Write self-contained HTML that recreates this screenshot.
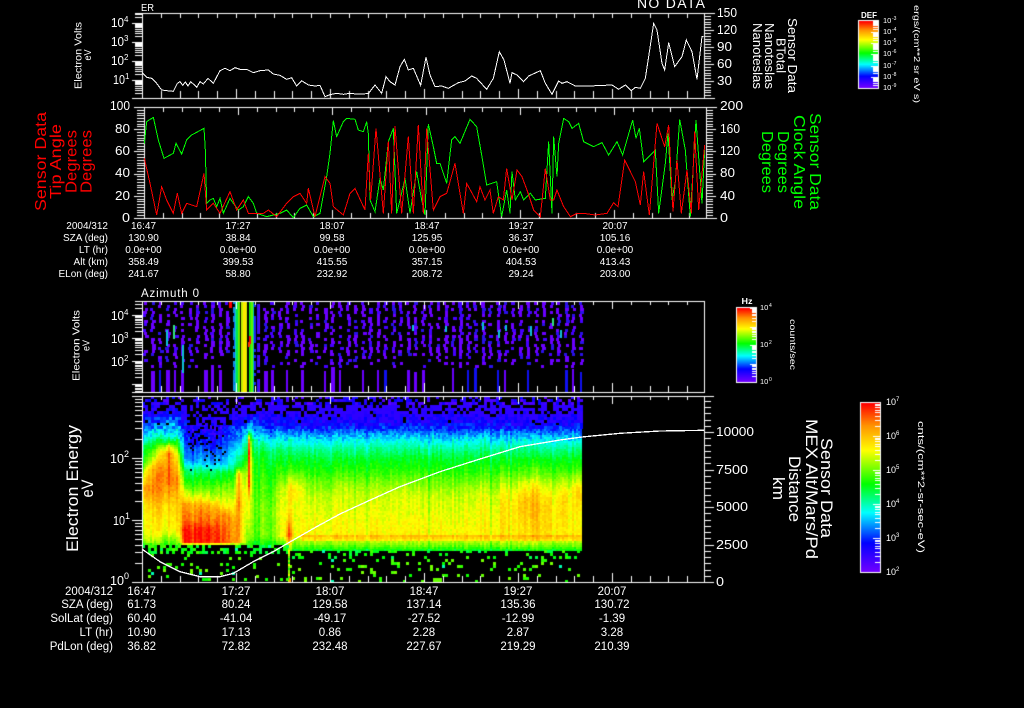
<!DOCTYPE html>
<html><head><meta charset="utf-8"><title>Sensor Data</title>
<style>
html,body{margin:0;padding:0;background:#000;width:1024px;height:708px;overflow:hidden}
canvas,svg{position:absolute;left:0;top:0}
svg{font-family:"Liberation Sans",sans-serif;fill:#fff}
.a{font-size:10px;text-anchor:middle}
.l{font-size:10px;text-anchor:end}
.b{font-size:11.5px;text-anchor:middle}
.m{font-size:11.5px;text-anchor:end}
.n{font-size:13px}
.cb{font-size:7.5px}
.r{text-anchor:middle}
polyline{fill:none;shape-rendering:crispEdges;vector-effect:non-scaling-stroke}
</style></head><body>
<canvas id="c" width="1024" height="708"></canvas>
<svg width="1024" height="708" viewBox="0 0 1024 708">
<!-- Panel 1 curve -->
<g transform="scale(.33333)"><polyline stroke="#fff" stroke-width="1" points="427,218 440,232 455,235 470,250 485,270 500,272 520,274 532,250 540,245 548,256 556,246 564,258 572,245 580,252 590,262 600,245 610,252 624,235 640,250 660,212 675,205 690,212 705,203 720,208 740,208 760,218 780,212 805,210 820,222 840,226 860,238 875,233 890,258 905,242 925,255 945,258 960,256 975,290 990,284 1010,280 1030,283 1050,280 1070,282 1105,281 1125,255 1145,280 1158,230 1170,245 1185,255 1200,200 1213,178 1225,210 1240,205 1262,256 1278,172 1290,225 1305,260 1325,258 1345,265 1375,248 1395,243 1415,228 1430,235 1460,268 1480,235 1498,155 1512,180 1530,250 1536,218 1551,225 1571,245 1586,228 1621,212 1636,250 1656,283 1676,243 1686,250 1701,245 1726,258 1766,258 1836,255 1856,268 1876,255 1894,272 1906,262 1921,265 1936,235 1946,170 1961,70 1971,90 1986,190 1994,210 2006,128 2024,200 2046,170 2059,120 2076,155 2091,238 2106,110 2111,110"/>
<!-- Panel 2 green -->
<polyline stroke="#00ff00" stroke-width="1" points="433,430 440,365 460,352 475,420 492,475 520,460 528,430 545,462 560,420 575,405 612,385 616,450 620,610 630,600 640,595 650,620 660,595 670,640 690,595 700,610 715,630 730,620 745,590 760,610 770,640 800,650 820,645 840,640 860,630 880,653 900,625 920,615 940,650 960,640 980,530 990,460 1000,362 1010,410 1030,365 1040,355 1065,358 1075,390 1090,395 1100,365 1105,400 1110,600 1125,635 1140,535 1150,570 1165,425 1180,385 1190,640 1200,600 1215,535 1230,640 1250,515 1265,600 1275,645 1285,372 1300,440 1310,490 1320,490 1340,550 1355,420 1365,410 1380,430 1410,358 1430,380 1445,465 1460,555 1490,545 1505,650 1520,570 1530,640 1536,515 1546,600 1561,575 1571,600 1591,580 1606,600 1636,595 1646,425 1656,640 1661,410 1671,530 1676,430 1691,355 1706,365 1716,385 1736,370 1751,425 1781,440 1806,428 1826,465 1851,425 1868,465 1898,360 1908,415 1918,385 1931,485 1966,450 1976,640 1996,490 2004,400 2016,600 2026,545 2039,358 2056,450 2071,650 2088,360 2106,610 2114,450"/>
<!-- Panel 2 red -->
<polyline stroke="#ff0000" stroke-width="1" points="433,475 450,550 470,645 485,560 500,600 520,640 532,580 545,640 560,610 590,620 612,520 620,630 640,610 660,640 690,575 710,630 730,600 745,640 770,640 790,640 805,630 830,650 860,610 880,590 900,580 920,610 925,565 945,650 975,530 990,550 1000,620 1030,645 1050,580 1065,565 1095,630 1105,460 1112,600 1128,385 1150,640 1165,425 1175,640 1185,378 1205,640 1225,410 1240,640 1255,375 1270,640 1280,385 1300,630 1320,590 1340,580 1350,545 1365,490 1390,640 1400,550 1430,605 1440,560 1455,600 1470,570 1480,640 1495,590 1510,600 1520,505 1536,600 1551,510 1566,530 1581,570 1601,630 1621,650 1636,505 1651,600 1661,600 1671,570 1691,620 1711,650 1731,640 1751,640 1786,645 1821,640 1841,608 1854,620 1874,480 1906,545 1921,615 1931,515 1948,645 1971,370 1994,440 2006,375 2019,635 2031,480 2044,640 2061,510 2074,640 2084,395 2096,630 2114,435"/>
</g>
<!-- Panel 4 altitude curve -->
<g transform="translate(0,290) scale(.33333)"><polyline stroke="#fff" stroke-width="1.3" points="427,778 480,815 540,845 600,860 660,860 700,850 760,815 820,785 880,750 950,710 1020,672 1100,635 1200,590"/></g>
<polyline stroke="#fff" stroke-width="1.3" points="400,486.7 440,471.7 480,459 520,446.7 560,440 582,437 620,433.3 660,431 704,430.3"/>

<!-- top -->
<text x="141" y="11" font-size="10" textLength="13" lengthAdjust="spacingAndGlyphs">ER</text>
<text x="637" y="8" font-size="14" textLength="68" lengthAdjust="spacing">NO DATA</text>

<!-- Panel 1 labels -->
<g class="n">
<text x="111" y="27" textLength="13" lengthAdjust="spacingAndGlyphs">10</text><text x="124" y="22" font-size="8">4</text>
<text x="111" y="46" textLength="13" lengthAdjust="spacingAndGlyphs">10</text><text x="124" y="41" font-size="8">3</text>
<text x="111" y="65" textLength="13" lengthAdjust="spacingAndGlyphs">10</text><text x="124" y="60" font-size="8">2</text>
<text x="113" y="84" textLength="12" lengthAdjust="spacingAndGlyphs">10</text><text x="125" y="79" font-size="8">1</text>
<text x="717" y="17" textLength="20" lengthAdjust="spacingAndGlyphs">150</text>
<text x="717" y="34" textLength="20" lengthAdjust="spacingAndGlyphs">120</text>
<text x="717" y="51" textLength="15" lengthAdjust="spacingAndGlyphs">90</text>
<text x="717" y="68" textLength="15" lengthAdjust="spacingAndGlyphs">60</text>
<text x="717" y="85" textLength="15" lengthAdjust="spacingAndGlyphs">30</text>
<!-- Panel 2 -->
<text x="110" y="110" textLength="20" lengthAdjust="spacingAndGlyphs">100</text>
<text x="115" y="133" textLength="15" lengthAdjust="spacingAndGlyphs">80</text>
<text x="115" y="155" textLength="15" lengthAdjust="spacingAndGlyphs">60</text>
<text x="115" y="177" textLength="15" lengthAdjust="spacingAndGlyphs">40</text>
<text x="115" y="200" textLength="15" lengthAdjust="spacingAndGlyphs">20</text>
<text x="122" y="222" textLength="8" lengthAdjust="spacingAndGlyphs">0</text>
<text x="720" y="110" textLength="23" lengthAdjust="spacingAndGlyphs">200</text>
<text x="720" y="133" textLength="20" lengthAdjust="spacingAndGlyphs">160</text>
<text x="720" y="155" textLength="20" lengthAdjust="spacingAndGlyphs">120</text>
<text x="720" y="177" textLength="15" lengthAdjust="spacingAndGlyphs">80</text>
<text x="720" y="200" textLength="15" lengthAdjust="spacingAndGlyphs">40</text>
<text x="720" y="222" textLength="8" lengthAdjust="spacingAndGlyphs">0</text>
<!-- Panel 3 -->
<text x="111" y="320" textLength="13" lengthAdjust="spacingAndGlyphs">10</text><text x="124" y="315" font-size="8">4</text>
<text x="111" y="343" textLength="13" lengthAdjust="spacingAndGlyphs">10</text><text x="124" y="338" font-size="8">3</text>
<text x="111" y="366" textLength="13" lengthAdjust="spacingAndGlyphs">10</text><text x="124" y="361" font-size="8">2</text>
<!-- Panel 4 -->
<text x="110" y="463" textLength="14" lengthAdjust="spacingAndGlyphs">10</text><text x="124" y="457" font-size="9">2</text>
<text x="113" y="525" textLength="12" lengthAdjust="spacingAndGlyphs">10</text><text x="125" y="519" font-size="9">1</text>
<text x="110" y="585" textLength="14" lengthAdjust="spacingAndGlyphs">10</text><text x="124" y="579" font-size="9">0</text>
<text x="716" y="436" textLength="38" lengthAdjust="spacingAndGlyphs">10000</text>
<text x="716" y="474" textLength="32" lengthAdjust="spacingAndGlyphs">7500</text>
<text x="716" y="511" textLength="32" lengthAdjust="spacingAndGlyphs">5000</text>
<text x="716" y="549" textLength="32" lengthAdjust="spacingAndGlyphs">2500</text>
<text x="716" y="586" textLength="8" lengthAdjust="spacingAndGlyphs">0</text>
</g>

<!-- Y titles -->
<g class="r" font-size="10">
<text transform="translate(81.5,55.5) rotate(-90)" textLength="67" lengthAdjust="spacingAndGlyphs">Electron Volts</text>
<text transform="translate(91,55) rotate(-90)" textLength="11" lengthAdjust="spacingAndGlyphs">eV</text>
<text transform="translate(79.5,345.5) rotate(-90)" textLength="71" lengthAdjust="spacingAndGlyphs">Electron Volts</text>
<text transform="translate(89.5,345.5) rotate(-90)" textLength="11" lengthAdjust="spacingAndGlyphs">eV</text>
</g>
<g class="r" font-size="17">
<text transform="translate(78,488.5) rotate(-90)" textLength="127" lengthAdjust="spacingAndGlyphs">Electron Energy</text>
<text transform="translate(93,488.5) rotate(-90)" textLength="18" lengthAdjust="spacingAndGlyphs">eV</text>
</g>
<g class="r" font-size="16" style="fill:#ff0000">
<text transform="translate(46,161.5) rotate(-90)" textLength="99" lengthAdjust="spacingAndGlyphs">Sensor Data</text>
<text transform="translate(61,161.5) rotate(-90)" textLength="75" lengthAdjust="spacingAndGlyphs">Tip Angle</text>
<text transform="translate(76.5,161.5) rotate(-90)" textLength="63" lengthAdjust="spacingAndGlyphs">Degrees</text>
<text transform="translate(91.5,161.5) rotate(-90)" textLength="63" lengthAdjust="spacingAndGlyphs">Degrees</text>
</g>
<g class="r" font-size="16" style="fill:#00ff00">
<text transform="translate(810,161.5) rotate(90)" textLength="97" lengthAdjust="spacingAndGlyphs">Sensor Data</text>
<text transform="translate(794,162) rotate(90)" textLength="94" lengthAdjust="spacingAndGlyphs">Clock Angle</text>
<text transform="translate(778,162) rotate(90)" textLength="62" lengthAdjust="spacingAndGlyphs">Degrees</text>
<text transform="translate(762,162) rotate(90)" textLength="62" lengthAdjust="spacingAndGlyphs">Degrees</text>
</g>
<g class="r" font-size="13">
<text transform="translate(788,55.5) rotate(90)" textLength="75" lengthAdjust="spacingAndGlyphs">Sensor Data</text>
<text transform="translate(776.5,55.5) rotate(90)" textLength="35" lengthAdjust="spacingAndGlyphs">BTotal</text>
<text transform="translate(765,56) rotate(90)" textLength="66" lengthAdjust="spacingAndGlyphs">Nanoteslas</text>
<text transform="translate(753,56) rotate(90)" textLength="66" lengthAdjust="spacingAndGlyphs">Nanoteslas</text>
</g>
<g class="r" font-size="17">
<text transform="translate(821,488) rotate(90)" textLength="100" lengthAdjust="spacingAndGlyphs">Sensor Data</text>
<text transform="translate(806,489) rotate(90)" textLength="140" lengthAdjust="spacingAndGlyphs">MEX Alt/Mars/Pd</text>
<text transform="translate(789,489) rotate(90)" textLength="66" lengthAdjust="spacingAndGlyphs">Distance</text>
<text transform="translate(773,488.5) rotate(90)" textLength="23" lengthAdjust="spacingAndGlyphs">km</text>
</g>

<!-- Table under panel 2 -->
<text class="l" x="108" y="229">2004/312</text><text class="a" x="143.5" y="229">16:47</text><text class="a" x="238" y="229">17:27</text><text class="a" x="332" y="229">18:07</text><text class="a" x="427" y="229">18:47</text><text class="a" x="521" y="229">19:27</text><text class="a" x="615" y="229">20:07</text>
<text class="l" x="108" y="241">SZA (deg)</text><text class="a" x="143.5" y="241">130.90</text><text class="a" x="238" y="241">38.84</text><text class="a" x="332" y="241">99.58</text><text class="a" x="427" y="241">125.95</text><text class="a" x="521" y="241">36.37</text><text class="a" x="615" y="241">105.16</text>
<text class="l" x="108" y="253">LT (hr)</text><text class="a" x="143.5" y="253">0.0e+00</text><text class="a" x="238" y="253">0.0e+00</text><text class="a" x="332" y="253">0.0e+00</text><text class="a" x="427" y="253">0.0e+00</text><text class="a" x="521" y="253">0.0e+00</text><text class="a" x="615" y="253">0.0e+00</text>
<text class="l" x="108" y="265">Alt (km)</text><text class="a" x="143.5" y="265">358.49</text><text class="a" x="238" y="265">399.53</text><text class="a" x="332" y="265">415.55</text><text class="a" x="427" y="265">357.15</text><text class="a" x="521" y="265">404.53</text><text class="a" x="615" y="265">413.43</text>
<text class="l" x="108" y="277">ELon (deg)</text><text class="a" x="143.5" y="277">241.67</text><text class="a" x="238" y="277">58.80</text><text class="a" x="332" y="277">232.92</text><text class="a" x="427" y="277">208.72</text><text class="a" x="521" y="277">29.24</text><text class="a" x="615" y="277">203.00</text>

<text x="141" y="297" font-size="11.5" textLength="58" lengthAdjust="spacing">Azimuth 0</text>

<!-- Table under panel 4 -->
<text class="m" x="113" y="595">2004/312</text><text class="b" x="141.7" y="595">16:47</text><text class="b" x="236" y="595">17:27</text><text class="b" x="330" y="595">18:07</text><text class="b" x="424" y="595">18:47</text><text class="b" x="518" y="595">19:27</text><text class="b" x="612" y="595">20:07</text>
<text class="m" x="113" y="608">SZA (deg)</text><text class="b" x="141.7" y="608">61.73</text><text class="b" x="236" y="608">80.24</text><text class="b" x="330" y="608">129.58</text><text class="b" x="424" y="608">137.14</text><text class="b" x="518" y="608">135.36</text><text class="b" x="612" y="608">130.72</text>
<text class="m" x="113" y="622">SolLat (deg)</text><text class="b" x="141.7" y="622">60.40</text><text class="b" x="236" y="622">-41.04</text><text class="b" x="330" y="622">-49.17</text><text class="b" x="424" y="622">-27.52</text><text class="b" x="518" y="622">-12.99</text><text class="b" x="612" y="622">-1.39</text>
<text class="m" x="113" y="636">LT (hr)</text><text class="b" x="141.7" y="636">10.90</text><text class="b" x="236" y="636">17.13</text><text class="b" x="330" y="636">0.86</text><text class="b" x="424" y="636">2.28</text><text class="b" x="518" y="636">2.87</text><text class="b" x="612" y="636">3.28</text>
<text class="m" x="113" y="650">PdLon (deg)</text><text class="b" x="141.7" y="650">36.82</text><text class="b" x="236" y="650">72.82</text><text class="b" x="330" y="650">232.48</text><text class="b" x="424" y="650">227.67</text><text class="b" x="518" y="650">219.29</text><text class="b" x="612" y="650">210.39</text>

<!-- Colorbar 1 labels -->
<text x="861" y="18" font-size="8.5" font-weight="bold" textLength="16" lengthAdjust="spacingAndGlyphs">DEF</text>
<g class="cb">
<text x="883" y="23">10</text><text x="892" y="20" font-size="5">-3</text>
<text x="883" y="34">10</text><text x="892" y="31" font-size="5">-4</text>
<text x="883" y="45">10</text><text x="892" y="42" font-size="5">-5</text>
<text x="883" y="56">10</text><text x="892" y="53" font-size="5">-6</text>
<text x="883" y="68">10</text><text x="892" y="65" font-size="5">-7</text>
<text x="883" y="79">10</text><text x="892" y="76" font-size="5">-8</text>
<text x="883" y="90">10</text><text x="892" y="87" font-size="5">-9</text>
</g>
<text class="r" font-size="8" transform="translate(914,54) rotate(90)" textLength="98" lengthAdjust="spacingAndGlyphs">ergs/(cm**2 sr eV s)</text>

<!-- Colorbar 2 labels -->
<text x="741.5" y="304" font-size="8.5" font-weight="bold" textLength="11" lengthAdjust="spacingAndGlyphs">Hz</text>
<g class="cb">
<text x="760" y="310">10</text><text x="769" y="307" font-size="5">4</text>
<text x="760" y="347">10</text><text x="769" y="344" font-size="5">2</text>
<text x="760" y="384">10</text><text x="769" y="381" font-size="5">0</text>
</g>
<text class="r" font-size="8" transform="translate(790,344.5) rotate(90)" textLength="51" lengthAdjust="spacingAndGlyphs">counts/sec</text>

<!-- Colorbar 3 labels -->
<g font-size="9">
<text x="886" y="405">10</text><text x="896" y="401" font-size="6">7</text>
<text x="886" y="439">10</text><text x="896" y="435" font-size="6">6</text>
<text x="886" y="473">10</text><text x="896" y="469" font-size="6">5</text>
<text x="886" y="507">10</text><text x="896" y="503" font-size="6">4</text>
<text x="886" y="541">10</text><text x="896" y="537" font-size="6">3</text>
<text x="886" y="575">10</text><text x="896" y="571" font-size="6">2</text>
</g>
<text class="r" font-size="9" transform="translate(918,487) rotate(90)" textLength="132" lengthAdjust="spacingAndGlyphs">cnts/(cm**2-sr-sec-eV)</text>
</svg>
<script>
(function(){
var c=document.getElementById('c').getContext('2d');
c.fillStyle='#000';c.fillRect(0,0,1024,708);
var seed=12345;
function rnd(){seed=(seed*1664525+1013904223)%4294967296;return seed/4294967296;}
function R(x,y,w,h,col){c.fillStyle=col;c.fillRect(Math.round(x),Math.round(y),w,h);}
var stops=[[0,[112,0,255]],[.17,[0,0,255]],[.35,[0,255,255]],[.52,[0,255,0]],[.72,[255,255,0]],[.87,[255,145,0]],[1,[255,0,0]]];
function col(v){
 if(v<0)v=0;if(v>1)v=1;
 for(var i=1;i<stops.length;i++){if(v<=stops[i][0]){
  var a=stops[i-1],b=stops[i],t=(v-a[0])/(b[0]-a[0]);
  return 'rgb('+Math.round(a[1][0]+(b[1][0]-a[1][0])*t)+','+Math.round(a[1][1]+(b[1][1]-a[1][1])*t)+','+Math.round(a[1][2]+(b[1][2]-a[1][2])*t)+')';
 }}
 return 'rgb(255,0,0)';
}
function prof(p,y){
 if(y<=p[0][0])return p[0][1];
 for(var i=1;i<p.length;i++){if(y<=p[i][0]){var t=(y-p[i-1][0])/(p[i][0]-p[i-1][0]);return p[i-1][1]+(p[i][1]-p[i-1][1])*t;}}
 return p[p.length-1][1];
}
var D=[[396,-.12],[408,.05],[425,.17],[437,.33],[447,.42],[458,.5],[470,.55],[482,.62],[495,.68],[520,.72],[535,.74],[545,.6],[550,.5]];
var cols=[
[142,[[396,-.1],[405,.1],[418,.2],[437,.34],[445,.48],[462,.56],[470,.68],[487,.85],[507,.74],[530,.72],[540,.66],[546,.5]]],
[152,[[396,-.1],[405,.1],[420,.2],[432,.34],[445,.5],[458,.66],[468,.82],[490,.87],[510,.76],[530,.72],[540,.66],[546,.5]]],
[168,[[396,-.08],[405,.1],[420,.25],[432,.36],[440,.5],[445,.72],[452,.9],[478,.93],[490,.87],[503,.8],[530,.74],[545,.55]]],
[177,[[396,-.08],[405,.08],[420,.24],[432,.36],[442,.52],[455,.72],[480,.88],[500,.8],[530,.74],[545,.55]]],
[184,[[396,-.1],[405,.04],[420,.14],[440,.2],[460,.3],[470,.46],[483,.56],[495,.72],[503,.85],[520,.92],[530,1],[541,1],[545,.5]]],
[215,[[396,-.1],[405,.02],[420,.08],[440,.16],[462,.3],[472,.47],[483,.56],[497,.68],[505,.82],[520,.9],[528,.97],[541,.97],[545,.5]]],
[224,[[396,-.1],[405,.02],[420,.1],[440,.2],[462,.3],[474,.5],[490,.62],[505,.72],[514,.86],[530,.9],[541,.92],[545,.5]]],
[233,[[396,-.1],[405,.04],[425,.2],[445,.32],[465,.44],[476,.55],[490,.64],[505,.74],[518,.85],[541,.88],[545,.5]]],
[238,[[396,-.1],[408,.06],[425,.2],[445,.34],[465,.5],[473,.84],[500,.9],[541,.88],[545,.5]]],
[243,[[396,-.1],[408,.06],[425,.22],[445,.38],[465,.52],[480,.62],[500,.7],[541,.66],[546,.5]]],
[246,[[396,-.1],[408,.08],[425,.25],[440,.4],[460,.55],[480,.7],[510,.7],[541,.6],[546,.5]]],
[248,[[396,-.1],[410,.1],[430,.35],[438,.82],[450,.94],[485,.92],[500,.72],[535,.62],[546,.5]]],
[251,[[396,-.1],[410,.1],[430,.32],[440,.44],[460,.56],[490,.6],[510,.62],[535,.6],[546,.5]]],
[270,[[396,-.1],[408,.06],[425,.19],[437,.32],[450,.46],[470,.53],[490,.58],[510,.62],[535,.62],[546,.5]]],
[282,[[396,-.1],[408,.06],[425,.19],[437,.33],[450,.45],[470,.54],[490,.66],[510,.7],[535,.7],[546,.5]]],
[300,D],[583,D]];
var blobs=[[293,487,6,12,.1],[345,484,5,8,.03],[400,490,5,9,.02],[505,500,5,22,.07],[522,500,6,16,.09],[535,500,6,22,.12],[548,505,4,22,.07],[562,498,5,18,.09],[578,490,5,14,.11],[480,500,4,18,.03],[288,535,2.5,14,.2]];
function val(x,y){
 var i=1;while(i<cols.length-1&&x>cols[i][0])i++;
 var a=cols[i-1],b=cols[i],t=(x-a[0])/(b[0]-a[0]);
 if(t<0)t=0;if(t>1)t=1;
 var v=prof(a[1],y)*(1-t)+prof(b[1],y)*t;
 for(var k=0;k<blobs.length;k++){var B=blobs[k],dx=(x-B[0])/B[2],dy=(y-B[1])/B[3];v+=B[4]*Math.exp(-(dx*dx+dy*dy)/2);}
 if(x>300&&y>533&&y<541)v+=.07;
 return v;
}
/* Panel 4 spectrogram */
for(var x=142;x<582;x+=2){
 var cn=(rnd()-.5)*.06;
 if(rnd()<.1)cn-=.04;
 for(var y=397;y<552;y+=2){
  var cut=x<288?545:550;
  if(y>=cut)continue;
  var v=val(x,y)+cn+(rnd()-.5)*(y<440?.1:.05);
  if(y<425)continue;
  if(v<-.02)continue;
  if(x>186&&x<226&&y<470&&rnd()<(y<450?.18:.05))continue;
  R(x,y,2,2,col(v));
 }
}
/* Coarse top region */
for(x=142;x<582;x+=3){
 for(y=396;y<428;y+=3){
  v=val(x,y)+(rnd()-.5)*.14;
  var p=y<404?.5:y<412?.72:.95;
  if(x>186&&x<232)p*=.6;
  if(rnd()<p&&v>-.15)R(x,y,3,3,col(Math.max(v,y<404?.03+rnd()*.14:.1)));
 }
}
/* Bottom speckle */
for(x=142;x<582;x+=3){
 var top=x<288?545:550;
 for(y=top;y<581;y+=3){
  var d=(y-top);
  var q=d<8?(x<288?.55:.22):.1;
  if(rnd()<q){
   var g=d<8?.46+rnd()*.12:.52+rnd()*.1;
   if(rnd()<.03)g=.4;
   R(x,y,3,3,col(g));
  }
 }
}
for(y=548;y<581;y+=2){R(288,y,2,2,col(.53+rnd()*.2));}
R(289,578,2,4,col(.86));
R(433,578,9,4,col(.6));

/* Panel 3 */
for(x=143.5;x<580;x+=7.52){
 if(x>228&&x<260)continue;
 for(y=302;y<392;y+=3){
  var pr=y<355?.72:y<368?.42:0;
  if(rnd()<pr){
   var w=rnd()<.7?3:4;
   var r=rnd(),cc=r<.62?'#6a00ff':r<.82?'#4400ff':'#2a10e8';
   var o=Math.round((rnd()-.5)*2);
   R(x+o,y,w,3,cc);
  }
 }
 if(rnd()<.55){
  w=rnd()<.5?2:(rnd()<.5?3:4);
  var st=rnd()<.6?370:366+Math.floor(rnd()*8);
  var cc2=rnd()<.8?'#6a00ff':'#1010f0';
  R(x,st,w,392-st,cc2);
 }
}
var hl=[[166,330,10],[166,338,8],[173,325,14],[182,345,20],[182,365,8],[412,325,6],[445,326,6],[482,322,8],[505,325,6],[530,326,10],[552,318,8],[560,330,8],[498,330,8]];
for(var i=0;i<hl.length;i++){R(hl[i][0],hl[i][1],2,hl[i][2],i==2||i==10?'#30e080':'#10c0d8');}
var st3=[[233,3,'#1060f0'],[235,2,'#10d0c0'],[236,2,'#00e850'],[238,2,'#60f000'],[240,1,'#000'],[241,2,'#c8f000'],[243,3,'#ffe800'],[246,1,'#d8f000'],[247,2,'#000'],[249,2,'#20f000'],[251,2,'#60f000'],[253,1,'#00c8b0'],[254,2,'#2020f0'],[256,1,'#000'],[257,2,'#3010f0'],[259,1,'#6a00ff']];
for(i=0;i<st3.length;i++){R(st3[i][0],301,st3[i][1],91,st3[i][2]);}
for(y=301;y<392;y+=3){R(233,y,1+Math.floor(rnd()*2),3,rnd()<.4?'#000':'#1090e0');if(rnd()<.4)R(254,y,3,3,'#000');if(rnd()<.3)R(257,y,3,3,'#000');}
R(229,301,3,7,'#ff0000');R(249,336,2,8,'#ff0000');R(248,342,2,5,'#ff3000');

/* Axis helpers */
var W='#fff';
function H(x1,x2,y){R(x1,y,Math.round(x2-x1),1,W);}
function Vt(x,y1,y2){R(x,y1,1,Math.round(y2-y1),W);}
function logTicks(x,y0,s,top,bot,lenMin,lenMaj){
 for(var n=-3;n<6;n++){
  var base=y0+n*s;
  for(var k=1;k<10;k++){
   var y=base-s*Math.log(k)/Math.LN10;
   if(y<top||y>bot)continue;
   if(k==1)H(x-lenMaj,x,y);else H(x-lenMin,x,y);
  }
 }
}
function timeTicks(x0,top,bot,tMin,tMaj,bMin,bMaj,lim){
 for(var i=0;i<31;i++){
  var x=x0+18.8*i;if(x>lim)break;
  var m=i%5==0;
  Vt(x,top,top+(m?tMaj:tMin));
  Vt(x,bot-(m?bMaj:bMin),bot);
 }
}
/* Panel 1 */
H(135,715,13);H(132,715,98);Vt(142,13,98);Vt(704,13,98);
logTicks(142,80,19,13,98,7,10);
timeTicks(142,13,98,5,5,7,9,704);
for(i=0;i<=30;i++){var y1=98-i*85/30;if(i%6==0)H(704,714,y1);else H(704,711,y1);}
/* Panel 2 */
H(134,717,107);H(134,717,218);Vt(144,107,218);Vt(706,107,218);
for(i=0;i<=40;i++){y1=218-i*2.775;if(i%8==0)H(134,144,y1);else H(137,144,y1);if(i%8==0)H(706,716,y1);else H(706,713,y1);}
timeTicks(144,107,218,5,8,5,8,706);
/* Panel 3 */
H(135,705,301);H(132,705,392);Vt(142,301,392);Vt(704,301,392);
logTicks(142,315,23,301,392,7,10);
timeTicks(142,301,392,4,8,6,9,704);
/* Panel 4 */
H(132,714,396);H(132,714,582);Vt(142,396,582);Vt(704,396,582);
logTicks(142,458,62,396,582,7,10);
timeTicks(142,396,582,4,8,6,9,704);
for(i=0;i<=30;i++){y1=582-i*6.25;if(y1<396)break;if(i%6==0)H(704,714,y1);else H(704,711,y1);}

/* Colorbars */
function bar(x,y,w,h,dec,n,tw){
 for(var j=0;j<h;j++){R(x,y+j,w,1,col(1-j/(h-1)));}
 for(var d=0;d<=n;d++){
  var b=y+h-d*dec;
  for(var k=1;k<10;k++){
   var t=b-dec*Math.log(k)/Math.LN10;
   if(t<y||t>y+h)continue;
   H(x+w-(k==1?tw+2:tw),x+w,t);
  }
 }
 H(x-1,x+w+1,y-1);H(x-1,x+w+1,y+h);R(x-1,y-1,1,h+2,W);R(x+w,y-1,1,h+2,W);
}
bar(859,21,19,67,11.2,6,5);
bar(737,308,19,74,18.5,4,4);
bar(861,403,19,169,34,5,5);
})();
</script>
</body></html>
